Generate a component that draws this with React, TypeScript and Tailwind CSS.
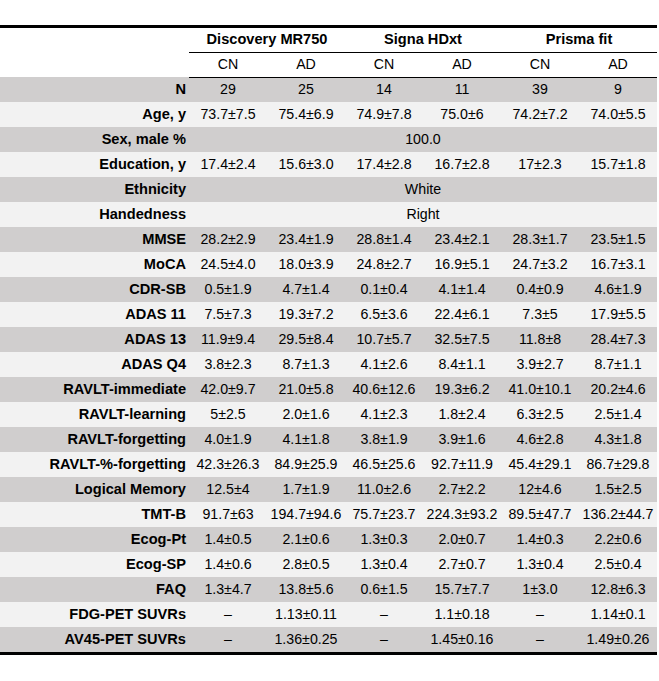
const groups = ["Discovery MR750", "Signa HDxt", "Prisma fit"];

type Row = { label: string; values?: string[]; span?: string };

const rows: Row[] = [
  { label: "N", values: ["29", "25", "14", "11", "39", "9"] },
  { label: "Age, y", values: ["73.7±7.5", "75.4±6.9", "74.9±7.8", "75.0±6", "74.2±7.2", "74.0±5.5"] },
  { label: "Sex, male %", span: "100.0" },
  { label: "Education, y", values: ["17.4±2.4", "15.6±3.0", "17.4±2.8", "16.7±2.8", "17±2.3", "15.7±1.8"] },
  { label: "Ethnicity", span: "White" },
  { label: "Handedness", span: "Right" },
  { label: "MMSE", values: ["28.2±2.9", "23.4±1.9", "28.8±1.4", "23.4±2.1", "28.3±1.7", "23.5±1.5"] },
  { label: "MoCA", values: ["24.5±4.0", "18.0±3.9", "24.8±2.7", "16.9±5.1", "24.7±3.2", "16.7±3.1"] },
  { label: "CDR-SB", values: ["0.5±1.9", "4.7±1.4", "0.1±0.4", "4.1±1.4", "0.4±0.9", "4.6±1.9"] },
  { label: "ADAS 11", values: ["7.5±7.3", "19.3±7.2", "6.5±3.6", "22.4±6.1", "7.3±5", "17.9±5.5"] },
  { label: "ADAS 13", values: ["11.9±9.4", "29.5±8.4", "10.7±5.7", "32.5±7.5", "11.8±8", "28.4±7.3"] },
  { label: "ADAS Q4", values: ["3.8±2.3", "8.7±1.3", "4.1±2.6", "8.4±1.1", "3.9±2.7", "8.7±1.1"] },
  { label: "RAVLT-immediate", values: ["42.0±9.7", "21.0±5.8", "40.6±12.6", "19.3±6.2", "41.0±10.1", "20.2±4.6"] },
  { label: "RAVLT-learning", values: ["5±2.5", "2.0±1.6", "4.1±2.3", "1.8±2.4", "6.3±2.5", "2.5±1.4"] },
  { label: "RAVLT-forgetting", values: ["4.0±1.9", "4.1±1.8", "3.8±1.9", "3.9±1.6", "4.6±2.8", "4.3±1.8"] },
  { label: "RAVLT-%-forgetting", values: ["42.3±26.3", "84.9±25.9", "46.5±25.6", "92.7±11.9", "45.4±29.1", "86.7±29.8"] },
  { label: "Logical Memory", values: ["12.5±4", "1.7±1.9", "11.0±2.6", "2.7±2.2", "12±4.6", "1.5±2.5"] },
  { label: "TMT-B", values: ["91.7±63", "194.7±94.6", "75.7±23.7", "224.3±93.2", "89.5±47.7", "136.2±44.7"] },
  { label: "Ecog-Pt", values: ["1.4±0.5", "2.1±0.6", "1.3±0.3", "2.0±0.7", "1.4±0.3", "2.2±0.6"] },
  { label: "Ecog-SP", values: ["1.4±0.6", "2.8±0.5", "1.3±0.4", "2.7±0.7", "1.3±0.4", "2.5±0.4"] },
  { label: "FAQ", values: ["1.3±4.7", "13.8±5.6", "0.6±1.5", "15.7±7.7", "1±3.0", "12.8±6.3"] },
  { label: "FDG-PET SUVRs", values: ["–", "1.13±0.11", "–", "1.1±0.18", "–", "1.14±0.1"] },
  { label: "AV45-PET SUVRs", values: ["–", "1.36±0.25", "–", "1.45±0.16", "–", "1.49±0.26"] },
];

export default function App() {
  return (
    <div className="w-[659px] h-[681px] bg-white pt-[25px] font-['Liberation_Sans',Arial,sans-serif] text-[14.2px] text-black">
      <div className="w-[657px] border-t-[3px] border-b-[3px] border-black">
        {/* scanner header, underlined across the data columns */}
        <div className="grid grid-cols-[189px_156px_156px_156px] h-[24px] items-center">
          <div />
          {groups.map((g) => (
            <div key={g} className="text-center font-bold text-[14.6px]">
              {g}
            </div>
          ))}
        </div>
        <div className="grid grid-cols-[189px_468px] h-px">
          <div />
          <div className="bg-black" />
        </div>
        <div className="grid grid-cols-[189px_repeat(6,78px)] h-[24px] items-center">
          <div />
          {groups.flatMap((g) => [
            <div key={g + "cn"} className="text-center">CN</div>,
            <div key={g + "ad"} className="text-center">AD</div>,
          ])}
        </div>
        <div className="grid grid-cols-[189px_468px] h-px">
          <div className="bg-[#d0cece]" />
          <div className="bg-black" />
        </div>

        {rows.map((r, i) => (
          <div
            key={r.label}
            className={`grid grid-cols-[189px_repeat(6,78px)] items-center ${
              i === 0 ? "h-[24px]" : "h-[25px]"
            } ${i % 2 === 0 ? "bg-[#d0cece]" : "bg-[#f2f2f2]"}`}
          >
            <div className="text-right font-bold text-[14.6px] pr-[3px] whitespace-nowrap">{r.label}</div>
            {r.span ? (
              <div className="col-span-6 text-center">{r.span}</div>
            ) : (
              r.values!.map((v, j) => (
                <div key={j} className="text-center whitespace-nowrap">
                  {v}
                </div>
              ))
            )}
          </div>
        ))}
      </div>
    </div>
  );
}
